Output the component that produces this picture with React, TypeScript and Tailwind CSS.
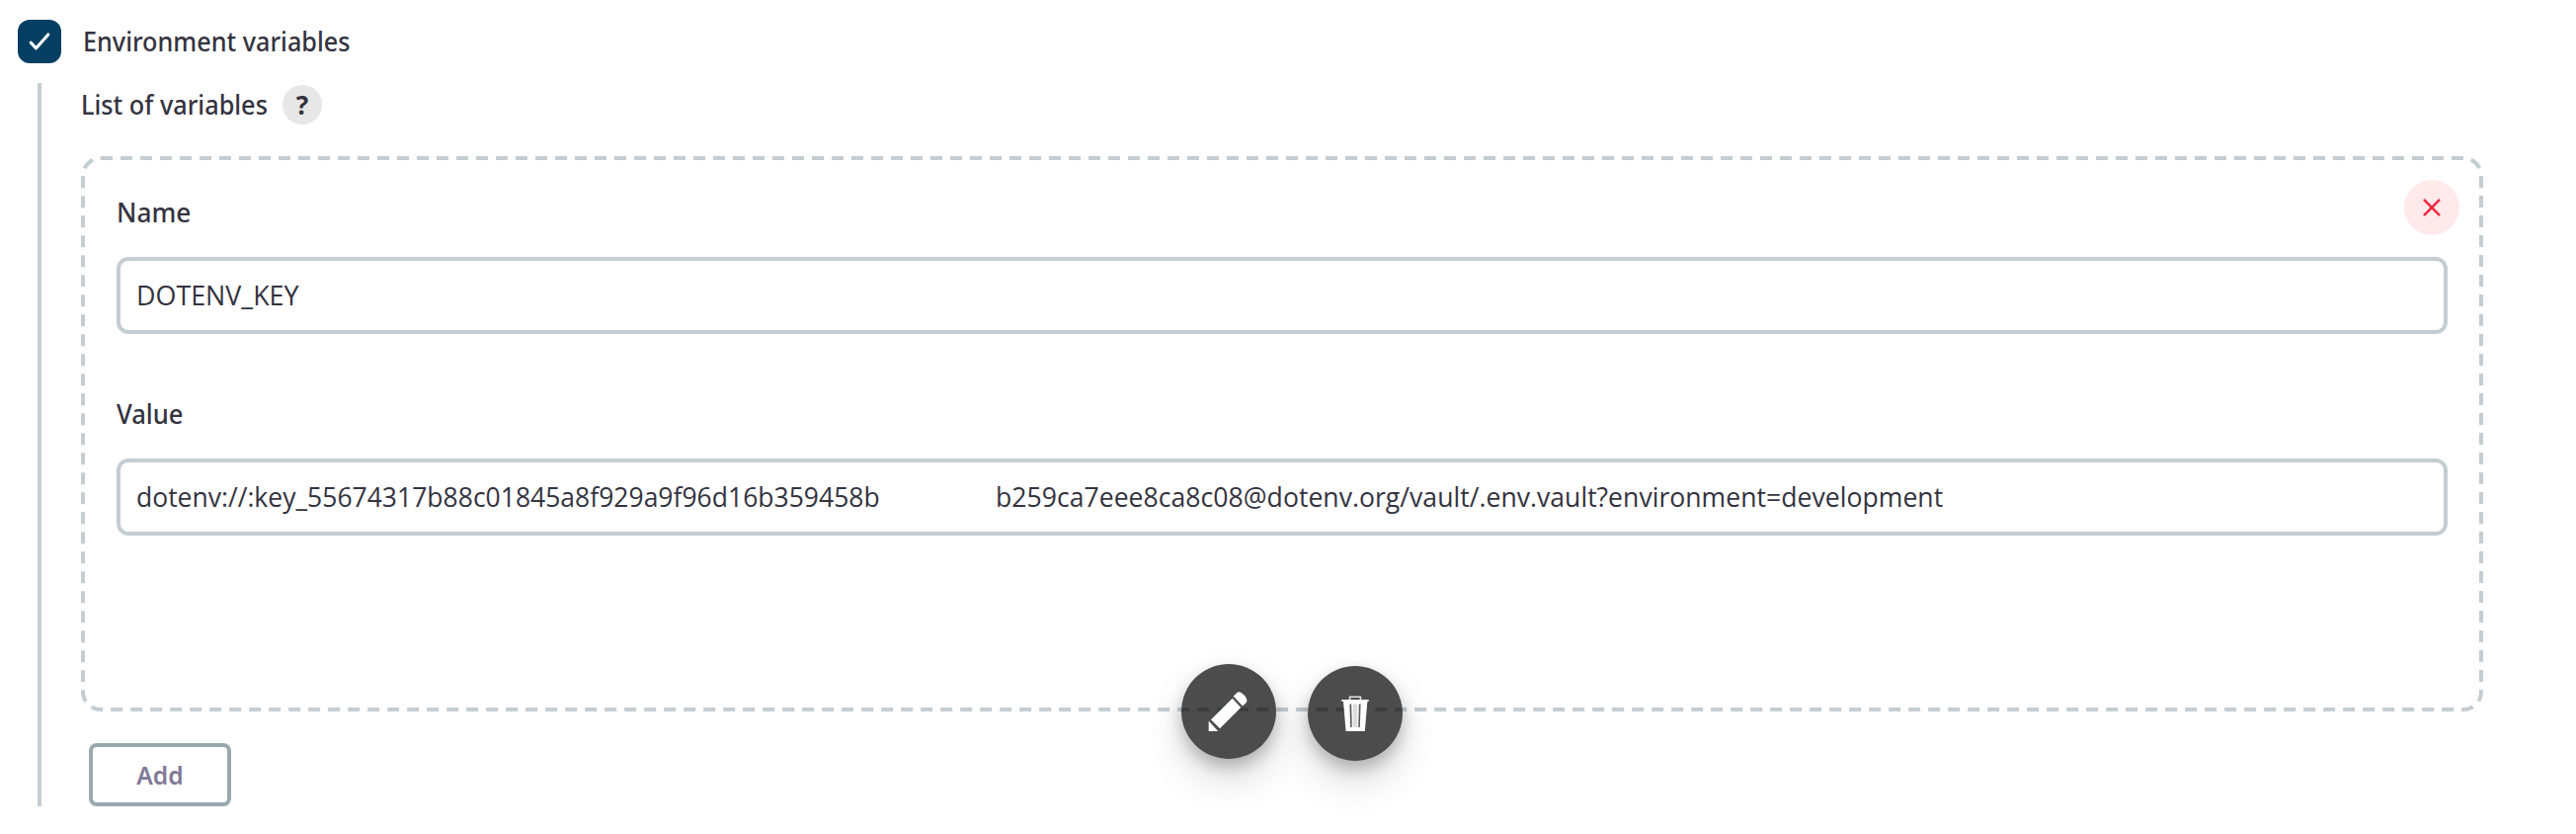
import type { ReactNode } from "react";

const label = "inline-block origin-left whitespace-nowrap font-['Noto_Sans',sans-serif] text-[27.5px] leading-[40px] font-medium text-[#34333f]";
const value = "block origin-left whitespace-pre font-['Open_Sans',sans-serif] text-[27.5px] leading-[40px] text-[#34333f]";

function Field({ title, children }: { title: ReactNode; children: ReactNode }) {
  return (
    <div className="flex flex-col gap-[25px]">
      <div className="h-10">{title}</div>
      <div className="flex h-[78px] w-[2360px] items-center rounded-xl border-4 border-[#c4cdd2] bg-white pl-4">
        {children}
      </div>
    </div>
  );
}

function CheckIcon() {
  return (
    <svg width="44" height="44" viewBox="0 0 44 44" fill="none">
      <path d="M13.2 23.2 18.6 28.8 30.8 15" stroke="#fff" strokeWidth="3.1" strokeLinecap="round" strokeLinejoin="round" />
    </svg>
  );
}

function CloseIcon() {
  return (
    <svg width="56" height="56" viewBox="0 0 56 56" fill="none">
      <path d="M20.7 20.7 35.3 35.3M35.3 20.7 20.7 35.3" stroke="#ee2a41" strokeWidth="2.6" strokeLinecap="round" />
    </svg>
  );
}

function PencilIcon() {
  return (
    <svg width="96" height="96" viewBox="0 0 96 96" fill="#fff">
      <path d="M30 56.3 51.7 34.7 60.3 44 39 65.3Z" />
      <path d="M27.7 57.4 37.2 68 27.7 68Z" />
      <path d="M52.7 32.6 56 29.3Q58 27.3 61 29.2Q64 31.2 65.6 34.2Q67.3 37.2 65.5 39.2L62 42.4Z" />
    </svg>
  );
}

function TrashIcon() {
  return (
    <svg width="96" height="96" viewBox="0 0 96 96">
      <path d="M42.6 34.5V31.2H53.4V34.5" fill="none" stroke="#e4e4e4" strokeWidth="1.6" />
      <path d="M34.2 34H61.8V35.8H60.4L57.8 66H38.6L36 35.8H34.2Z" fill="#fff" />
      <path d="M42.4 38.4H44.2L44.8 62H43.2ZM51.8 38.4H53.6L52.8 62H51.2Z" fill="#5c5c5c" />
      <path d="M45.8 38.4H50.2V62H45.8Z" fill="#dcdcdc" />
    </svg>
  );
}

const round =
  "flex size-24 items-center justify-center rounded-full bg-black/70 shadow-[0_20px_40px_rgba(0,0,0,0.15),0_8px_16px_rgba(0,0,0,0.22)]";

export default function App() {
  return (
    <main className="relative h-[844px] w-[2608px] overflow-hidden bg-white pt-5 pl-[18px]">
      <div className="flex h-11 items-center gap-[22px]">
        <div role="checkbox" aria-checked="true" className="size-11 rounded-xl bg-[#053f63]">
          <CheckIcon />
        </div>
        <span className={`${label} scale-x-[0.917]`}>Environment variables</span>
      </div>

      <section className="mt-5 ml-5 h-[732px] border-l-4 border-[#c4cdd2] pl-[39px]">
        <div className="flex h-11 items-center">
          <div className="w-[205px] pl-px">
            <span className={`${label} scale-x-[0.919]`}>List of variables</span>
          </div>
          <div className="flex size-10 items-center justify-center rounded-full bg-[#e7e7e7] font-['Noto_Sans',sans-serif] text-[26px] leading-none font-bold text-[#34333f]">
            ?
          </div>
        </div>

        <div className="relative mt-[30px] ml-px h-[562px] w-[2432px]">
          <div className="pointer-events-none absolute top-0 left-0 h-[281px] w-[1216px] origin-top-left scale-200 rounded-[10px] border-2 border-dashed border-[#c4cdd2]" />
          <div className="flex flex-col gap-[61px] pt-[37px] pl-9">
            <Field title={<span className={`${label} scale-x-[0.955]`}>Name</span>}>
              <span className={`${value} scale-x-[0.977]`}>DOTENV_KEY</span>
            </Field>
            <Field title={<span className={`${label} scale-x-[0.93]`}>Value</span>}>
              <span className="w-[870px]">
                <span className={`${value} scale-x-[0.964]`}>dotenv://:key_55674317b88c01845a8f929a9f96d16b359458b</span>
              </span>
              <span className={`${value} scale-x-[0.968]`}>
                b259ca7eee8ca8c08@dotenv.org/vault/.env.vault?environment=development
              </span>
            </Field>
          </div>
          <button aria-label="Remove" className="absolute top-6 right-6 size-14 rounded-full bg-[#ffe9eb]">
            <CloseIcon />
          </button>
        </div>

        <button className="mt-8 ml-[9px] flex h-16 w-36 items-center justify-center rounded-lg border-4 border-[#99a8af] bg-white font-['Noto_Sans',sans-serif] text-[26px] leading-none font-semibold text-[#817a96]">
          <span className="scale-x-[0.947]">Add</span>
        </button>
      </section>

      <div className="absolute top-[672px] left-[1196px] flex gap-8">
        <button aria-label="Edit" className={round}>
          <PencilIcon />
        </button>
        <button aria-label="Delete" className={`${round} mt-0.5`}>
          <TrashIcon />
        </button>
      </div>
    </main>
  );
}
